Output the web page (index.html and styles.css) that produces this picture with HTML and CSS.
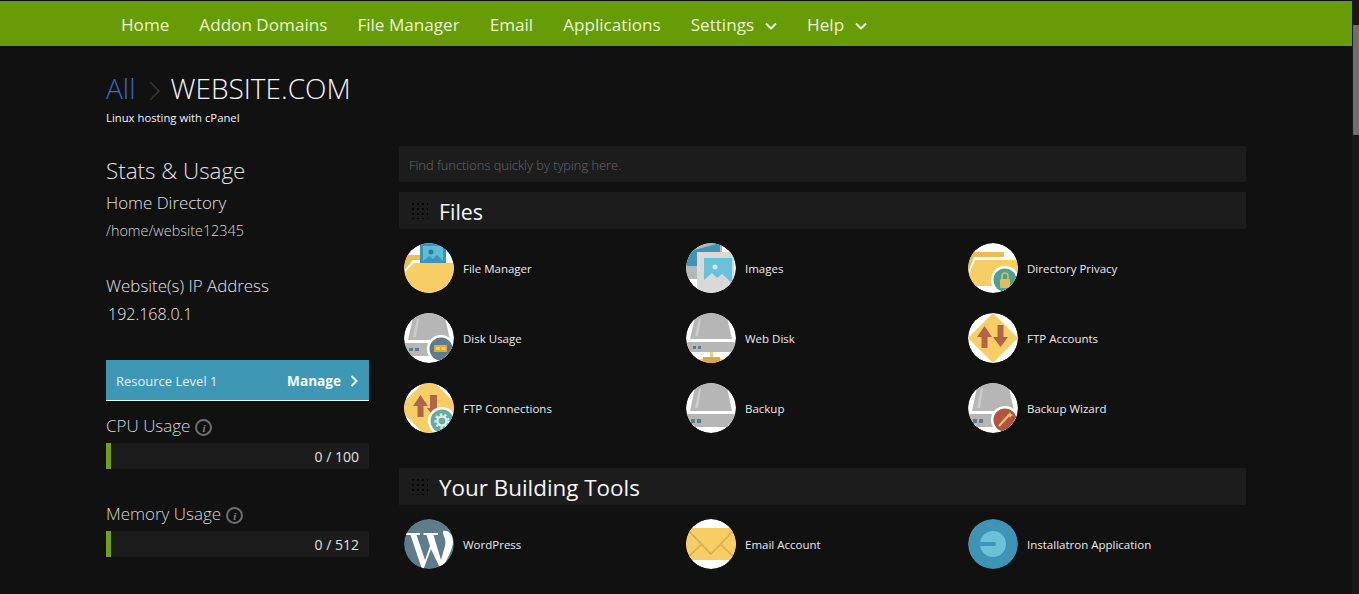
FILE: index.html
```html
<html>

<head>
    <title>cPanel</title>
    <link rel="stylesheet" href="styles.css">
</head>

<body>
    <div class="page">
        <div class="topNav">
            <span class="navItem">Home</span>
            <span class="navItem">Addon Domains</span>
            <span class="navItem">File Manager</span>
            <span class="navItem">Email</span>
            <span class="navItem">Applications</span>
            <span class="navItem">Settings
                <svg class="caret" viewBox="0 0 12 8"><path d="M1 1.5 L6 6.5 L11 1.5" /></svg>
            </span>
            <span class="navItem">Help
                <svg class="caret" viewBox="0 0 12 8"><path d="M1 1.5 L6 6.5 L11 1.5" /></svg>
            </span>
        </div>

        <div class="crumbs">
            <div class="crumbLine">
                <span class="crumbAll">All</span>
                <svg class="crumbArrow" viewBox="0 0 12 20"><path d="M1 1 L10 10 L1 19" /></svg>
                <span class="crumbSite">WEBSITE.COM</span>
            </div>
            <div class="crumbSub">Linux hosting with cPanel</div>
        </div>

        <div class="columns">
            <div class="sidebar">
                <div class="statsTitle">Stats &amp; Usage</div>
                <div class="statLabel">Home Directory</div>
                <div class="statValue">/home/website12345</div>
                <div class="statLabel ipLabel">Website(s) IP Address</div>
                <div class="ipValue">192.168.0.1</div>

                <div class="resource">
                    <span>Resource Level 1</span>
                    <span class="manage">Manage
                        <svg class="manageArrow" viewBox="0 0 8 12"><path d="M1.5 1 L6.5 6 L1.5 11" /></svg>
                    </span>
                </div>

                <div class="usageLabel">CPU Usage
                    <span class="infoIcon">i</span>
                </div>
                <div class="usageBar"><div class="usageFill"></div><span>0 / 100</span></div>

                <div class="usageLabel memoryLabel">Memory Usage
                    <span class="infoIcon">i</span>
                </div>
                <div class="usageBar"><div class="usageFill"></div><span>0 / 512</span></div>
            </div>

            <div class="mainCol">
                <div class="searchBox">Find functions quickly by typing here.</div>

                <div class="groupHead">
                    <svg class="grip" viewBox="0 0 16 16"><path d="M0 0h2v2H0zM5 0h2v2H5zM10 0h2v2h-2zM15 0h1v2h-1zM0 5h2v2H0zM5 5h2v2H5zM10 5h2v2h-2zM15 5h1v2h-1zM0 10h2v2H0zM5 10h2v2H5zM10 10h2v2h-2zM15 10h1v2h-1zM0 15h2v1H0zM5 15h2v1H5zM10 15h2v1h-2zM15 15h1v1h-1z" /></svg>
                    <span>Files</span>
                </div>
                <div class="tiles">
                    <div class="tile">
                        <svg class="tileIcon" viewBox="0 0 50 50">
                            <rect width="50" height="50" fill="#fff" />
                            <path d="M0 12 H17 V17 H9 L0 28z" fill="#e9bf55" />
                            <rect x="16" y="0" width="26" height="20" fill="#3f93b3" />
                            <rect x="19" y="3" width="20" height="17" fill="#5dbcd6" />
                            <circle cx="27" cy="9" r="2.5" fill="#2f7f9f" />
                            <path d="M19 18 L25 13 L29 16 L33 12 L39 18 V20 H19z" fill="#3f93b3" />
                            <path d="M0 30 L10 20 H50 V50 H0z" fill="#f6ce65" />
                        </svg>
                        <span>File Manager</span>
                    </div>
                    <div class="tile">
                        <svg class="tileIcon" viewBox="0 0 50 50">
                            <rect width="50" height="50" fill="#fff" />
                            <rect x="0" y="0" width="36" height="36" fill="#b6b6b6" />
                            <path d="M1 9 L34 0 V9 H11 V23 H1z" fill="#3f93b3" />
                            <rect x="11" y="9" width="37" height="41" fill="#d9d9d9" />
                            <rect x="18" y="15" width="28" height="27" fill="#6cc1da" />
                            <circle cx="29" cy="24" r="2.5" fill="#cfe9f0" />
                            <path d="M18 42 V37 L26 30 L31 35 L36 31 L46 40 V42z" fill="#d9d9d9" />
                        </svg>
                        <span>Images</span>
                    </div>
                    <div class="tile">
                        <svg class="tileIcon" viewBox="0 0 50 50">
                            <rect width="50" height="50" fill="#fff" />
                            <path d="M2 9 H36 V14 H6 L0 30 V14z" fill="#e9bf55" />
                            <path d="M7 17 H50 V43 H0 V33z" fill="#f6ce65" />
                            <circle cx="37" cy="37" r="14" fill="#fff" />
                            <circle cx="37" cy="37" r="11.5" fill="#4e9f94" />
                            <rect x="32" y="36" width="10" height="9" rx="1" fill="#e3bc55" />
                            <path d="M34 36 V33 A3 3 0 0 1 40 33 V36" fill="none" stroke="#e3bc55" stroke-width="1.6" />
                        </svg>
                        <span>Directory Privacy</span>
                    </div>

                    <div class="tile">
                        <svg class="tileIcon" viewBox="0 0 50 50">
                            <rect width="50" height="50" fill="#fff" />
                            <path d="M4 27 L10 0 H40 L46 27z" fill="#b6b6b6" />
                            <path d="M9 24 L13 6 L15 5 L12 24z" fill="#cdcdcd" />
                            <path d="M0 30 H50 V40 Q50 43 47 43 H0z" fill="#b6b6b6" />
                            <rect x="5" y="35" width="4" height="3" fill="#5f7c8a" />
                            <rect x="11" y="35" width="4" height="3" fill="#5f7c8a" />
                            <circle cx="37" cy="36" r="14" fill="#fff" />
                            <circle cx="37" cy="36" r="11.5" fill="#5f7c8a" />
                            <rect x="30" y="32" width="13" height="7" fill="#e5a83f" />
                            <rect x="32" y="34" width="4" height="3" fill="#f6ce65" />
                            <rect x="37.5" y="34" width="4" height="3" fill="#f6ce65" />
                        </svg>
                        <span>Disk Usage</span>
                    </div>
                    <div class="tile">
                        <svg class="tileIcon" viewBox="0 0 50 50">
                            <rect width="50" height="50" fill="#fff" />
                            <path d="M4 26 L10 0 H40 L46 26z" fill="#b6b6b6" />
                            <path d="M9 23 L13 6 L15 5 L12 23z" fill="#cdcdcd" />
                            <rect x="0" y="29" width="50" height="10" rx="3" fill="#b6b6b6" />
                            <rect x="7" y="33" width="3" height="3" fill="#5f7c8a" />
                            <rect x="12" y="33" width="3" height="3" fill="#5f7c8a" />
                            <rect x="24" y="39" width="3" height="6" fill="#f6ce65" />
                            <rect x="8" y="46" width="34" height="4" fill="#f6ce65" />
                            <rect x="17" y="44" width="17" height="6" fill="#e8a33d" />
                        </svg>
                        <span>Web Disk</span>
                    </div>
                    <div class="tile">
                        <svg class="tileIcon" viewBox="0 0 50 50">
                            <rect width="50" height="50" fill="#fff" />
                            <path d="M25 0 L50 25 L25 50 L0 25z" fill="#f6ce65" />
                            <path d="M16.5 13 L24 24 H19.5 V35 H13.5 V24 H9z" fill="#b0654a" />
                            <path d="M29.5 12 H35.5 V24 H40 L32.5 34 L25 24 H29.5z" fill="#b0654a" />
                        </svg>
                        <span>FTP Accounts</span>
                    </div>

                    <div class="tile">
                        <svg class="tileIcon" viewBox="0 0 50 50">
                            <rect width="50" height="50" fill="#fff" />
                            <path d="M25 -6 L56 25 L25 56 L-6 25z" fill="#f6ce65" />
                            <path d="M16.5 12 L24 23 H19.5 V34 H13.5 V23 H9z" fill="#b0654a" />
                            <path d="M26 12 H33 V25 H37 L30 34 L23 25 H26z" fill="#b0654a" />
                            <circle cx="38" cy="38" r="14" fill="#fff" />
                            <circle cx="38" cy="38" r="11.5" fill="#63aca0" />
                            <circle cx="38" cy="38" r="6.5" fill="none" stroke="#d9ece8" stroke-width="2.4" stroke-dasharray="2.4 2.2" />
                            <circle cx="38" cy="38" r="4.5" fill="none" stroke="#d9ece8" stroke-width="2.4" />
                        </svg>
                        <span>FTP Connections</span>
                    </div>
                    <div class="tile">
                        <svg class="tileIcon" viewBox="0 0 50 50">
                            <rect width="50" height="50" fill="#fff" />
                            <path d="M4 28 L10 0 H40 L46 28z" fill="#b6b6b6" />
                            <path d="M9 25 L13 6 L15 5 L12 25z" fill="#cdcdcd" />
                            <path d="M0 31 H50 V44 H0z" fill="#b6b6b6" />
                            <rect x="5" y="36" width="4" height="4" fill="#5f7c8a" />
                            <rect x="11" y="36" width="4" height="4" fill="#5f7c8a" />
                        </svg>
                        <span>Backup</span>
                    </div>
                    <div class="tile">
                        <svg class="tileIcon" viewBox="0 0 50 50">
                            <rect width="50" height="50" fill="#fff" />
                            <path d="M4 28 L10 0 H40 L46 28z" fill="#b6b6b6" />
                            <path d="M9 25 L13 6 L15 5 L12 25z" fill="#cdcdcd" />
                            <path d="M0 31 H50 V44 H0z" fill="#b6b6b6" />
                            <rect x="5" y="36" width="4" height="4" fill="#5f7c8a" />
                            <rect x="11" y="36" width="4" height="4" fill="#5f7c8a" />
                            <circle cx="37" cy="37" r="14" fill="#fff" />
                            <circle cx="37" cy="37" r="11.5" fill="#b0563c" />
                            <path d="M31 43 L41 32" stroke="#f0c080" stroke-width="2" />
                            <path d="M42 29 L43 31 L45 32 L43 33 L42 35 L41 33 L39 32 L41 31z" fill="#f6ce65" />
                        </svg>
                        <span>Backup Wizard</span>
                    </div>
                </div>

                <div class="groupHead toolsHead">
                    <svg class="grip" viewBox="0 0 16 16"><path d="M0 0h2v2H0zM5 0h2v2H5zM10 0h2v2h-2zM15 0h1v2h-1zM0 5h2v2H0zM5 5h2v2H5zM10 5h2v2h-2zM15 5h1v2h-1zM0 10h2v2H0zM5 10h2v2H5zM10 10h2v2h-2zM15 10h1v2h-1zM0 15h2v1H0zM5 15h2v1H5zM10 15h2v1h-2zM15 15h1v1h-1z" /></svg>
                    <span>Your Building Tools</span>
                </div>
                <div class="tiles">
                    <div class="tile">
                        <svg class="tileIcon" viewBox="0 0 50 50">
                            <rect width="50" height="50" fill="#5f7c8a" />
                            <path d="M1 14 H16 V16 H12.5 L21 41 L26 27 L22.5 16 H19.5 V14 H34 V16 H29.5 L37 41 L41 27 C43 20 38.5 17 39 12 C45 11 49 16 49 23 C49 30 42 42 38 50 H36.5 L27 30 L19.5 50 H18 L6.5 16 H1z" fill="#fff" />
                        </svg>
                        <span>WordPress</span>
                    </div>
                    <div class="tile">
                        <svg class="tileIcon" viewBox="0 0 50 50">
                            <rect width="50" height="50" fill="#fff" />
                            <rect x="0" y="9" width="50" height="32" fill="#f6ce65" />
                            <path d="M3 12 L25 35 L47 12 M0 40 L16 25 M50 40 L34 25" fill="none" stroke="#d8ac4b" stroke-width="1.6" />
                        </svg>
                        <span>Email Account</span>
                    </div>
                    <div class="tile">
                        <svg class="tileIcon" viewBox="0 0 50 50">
                            <rect width="50" height="50" fill="#3f93b3" />
                            <circle cx="25" cy="25" r="13" fill="#6cc1da" />
                            <path d="M8 23 H26 A2 2 0 0 1 26 27 H8z" fill="#3f93b3" />
                        </svg>
                        <span>Installatron Application</span>
                    </div>
                </div>
            </div>
        </div>
    </div>

    <div class="scrollTrack">
        <div class="scrollThumb"></div>
    </div>
</body>
</html>
```

FILE: styles.css
```css
html, body {
    margin: 0;
    height: 594px;
    overflow: hidden;
}

body {
    background-color: rgb(17, 17, 17);
    color: rgb(240, 240, 240);
    font-family: "Open Sans", "Liberation Sans", sans-serif;
    display: flex;
}

.page {
    width: 1352px;
    height: 594px;
    overflow: hidden;
}

.scrollTrack {
    flex: 1;
    background-color: rgb(24, 24, 24);
    padding-top: 25px;
    padding-left: 1px;
}

.scrollThumb {
    height: 110px;
    background-color: rgb(110, 110, 110);
}

.topNav {
    margin-top: 1px;
    height: 43px;
    padding-top: 2px;
    background-color: rgb(104, 155, 8);
    display: flex;
    align-items: center;
    gap: 30px;
    padding-left: 121px;
    font-size: 17.12px;
    color: rgb(232, 245, 205);
}

.navItem {
    display: flex;
    align-items: center;
    gap: 10px;
}

.caret {
    width: 12px;
    height: 8px;
    margin-left: 1px;
    margin-top: 2px;
    fill: none;
    stroke: rgb(232, 245, 205);
    stroke-width: 2;
}

.crumbs {
    padding-left: 106px;
    padding-top: 22px;
    height: 77px;
}

.crumbLine {
    display: flex;
    align-items: center;
    height: 40px;
    font-size: 28px;
    font-weight: 300;
}

.crumbAll {
    color: rgb(52, 104, 190);
}

.crumbArrow {
    width: 12px;
    height: 20px;
    margin-left: 14px;
    margin-right: 9px;
    margin-top: 6px;
    fill: none;
    stroke: rgb(55, 55, 55);
    stroke-width: 1.5;
}

.crumbSite {
    color: rgb(245, 245, 245);
}

.crumbSub {
    font-size: 11.3px;
    line-height: 16px;
    margin-top: 2px;
    color: rgb(245, 245, 245);
}

.columns {
    display: flex;
    gap: 30px;
    padding-left: 106px;
}

.sidebar {
    width: 263px;
    font-weight: 300;
}

.statsTitle {
    font-size: 22.4px;
    line-height: 30px;
    margin-top: 11px;
    color: rgb(225, 225, 225);
}

.statLabel {
    font-size: 16.9px;
    line-height: 24px;
    margin-top: 5px;
    color: rgb(225, 225, 225);
}

.statValue {
    font-size: 14.4px;
    line-height: 20px;
    margin-top: 6px;
    color: rgb(215, 215, 215);
}

.ipLabel {
    margin-top: 33px;
}

.ipValue {
    font-size: 16px;
    line-height: 22px;
    margin-top: 5px;
    margin-left: 2px;
    color: rgb(235, 235, 235);
}

.resource {
    height: 39px;
    margin-top: 35px;
    padding: 1px 10px 0;
    background-color: rgb(62, 151, 181);
    border-bottom: 1px solid rgb(240, 248, 250);
    display: flex;
    align-items: center;
    justify-content: space-between;
    font-size: 13px;
    font-weight: 400;
    color: rgb(225, 240, 245);
}

.manage {
    display: flex;
    align-items: center;
    gap: 9px;
    font-size: 13.6px;
    font-weight: 700;
    color: rgb(245, 250, 252);
}

.manageArrow {
    width: 8px;
    height: 12px;
    margin-right: 1px;
    fill: none;
    stroke: rgb(245, 250, 252);
    stroke-width: 2;
}

.usageLabel {
    font-size: 17px;
    line-height: 24px;
    margin-top: 13px;
    display: flex;
    align-items: center;
    gap: 5px;
    color: rgb(215, 215, 215);
}

.memoryLabel {
    margin-top: 33px;
}

.infoIcon {
    width: 13px;
    height: 13px;
    margin-top: 3px;
    border: 2px solid rgb(110, 110, 110);
    border-radius: 50%;
    display: flex;
    align-items: center;
    justify-content: center;
    font-family: "Liberation Serif", serif;
    font-style: italic;
    font-weight: 700;
    font-size: 11px;
    color: rgb(130, 130, 130);
}

.usageBar {
    height: 26px;
    margin-top: 5px;
    background-color: rgb(28, 28, 28);
    display: flex;
    align-items: center;
    justify-content: space-between;
    padding-right: 10px;
    font-size: 14px;
    font-weight: 400;
    color: rgb(225, 225, 225);
}

.usageFill {
    width: 5px;
    height: 26px;
    background-color: rgb(112, 160, 25);
}

.mainCol {
    width: 847px;
}

.searchBox {
    height: 35px;
    margin-top: 1px;
    padding: 1px 0 0 10px;
    background-color: rgb(28, 28, 28);
    display: flex;
    align-items: center;
    font-size: 12.85px;
    font-weight: 300;
    color: rgb(105, 105, 105);
}

.groupHead {
    height: 36px;
    margin-top: 10px;
    padding: 1px 0 0 13px;
    background-color: rgb(28, 28, 28);
    display: flex;
    align-items: center;
    gap: 11px;
    font-size: 21.4px;
    color: rgb(245, 245, 245);
}

.toolsHead {
    margin-top: 25px;
    font-size: 22.4px;
}

.grip {
    width: 16px;
    height: 16px;
    fill: rgb(5, 5, 5);
}

.tiles {
    display: grid;
    grid-template-columns: repeat(3, 282px);
    padding-top: 4px;
}

.tile {
    height: 70px;
    padding-left: 5px;
    display: flex;
    align-items: center;
    gap: 9px;
    font-size: 11.5px;
    color: rgb(235, 235, 235);
}

.tileIcon {
    width: 50px;
    height: 50px;
    flex: none;
    border-radius: 50%;
    clip-path: circle(50%);
}
```
